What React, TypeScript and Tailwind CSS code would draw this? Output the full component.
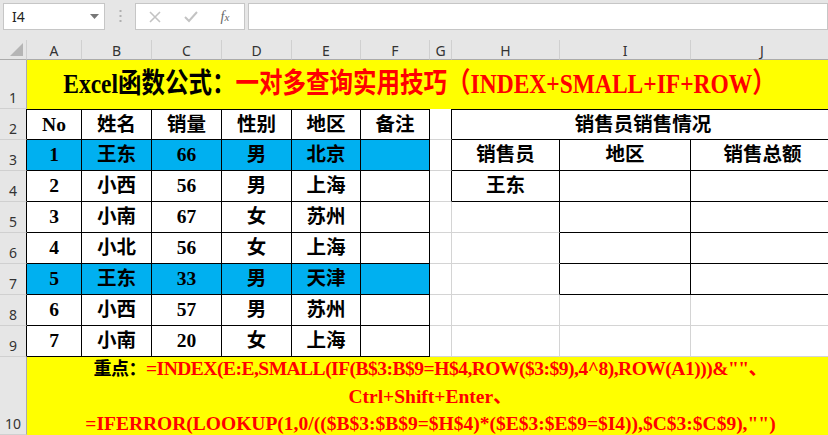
import React from "react";

type BC = "k" | "g" | "n";
const RB: Record<BC, string> = {
  k: "border-r border-r-black",
  g: "border-r border-r-[#d4d4d4]",
  n: "",
};
const BB: Record<BC, string> = {
  k: "border-b border-b-black",
  g: "border-b border-b-[#d4d4d4]",
  n: "",
};
const TB: Record<BC, string> = {
  k: "border-t border-t-black",
  g: "border-t border-t-[#d4d4d4]",
  n: "",
};

const serif = "font-['Liberation_Serif','Noto_Sans_CJK_SC',serif]";
const ui = "font-['Noto_Sans','Liberation_Sans',sans-serif]";

function Cell({
  children,
  r = "g",
  b = "g",
  t = "n",
  bg = "",
  span = "",
}: {
  children?: React.ReactNode;
  r?: BC;
  b?: BC;
  t?: BC;
  bg?: string;
  span?: string;
}) {
  return (
    <div
      className={`${RB[r]} ${BB[b]} ${TB[t]} ${bg} ${span} flex items-center justify-center overflow-hidden whitespace-nowrap ${serif} text-[19.5px] font-bold text-black leading-none`}
    >
      {children}
    </div>
  );
}

function RowHead({ n, dark }: { n: string; dark?: boolean }) {
  return (
    <div
      className={`bg-[#e6e6e6] border-b border-b-[#d0d0d0] border-r ${
        dark ? "border-r-black" : "border-r-[#ababab]"
      } flex items-end justify-center pb-[1px] ${ui} text-[14px] leading-[18px] text-[#333]`}
    >
      {n}
    </div>
  );
}

function ColHead({ l }: { l: string }) {
  return (
    <div
      className={`bg-[#e6e6e6] border-b border-b-[#ababab] border-r border-r-[#d0d0d0] flex items-center justify-center pt-[3px] ${ui} text-[14px] leading-none text-[#333]`}
    >
      {l}
    </div>
  );
}

const people: [string, string, string, string, string, boolean][] = [
  ["1", "王东", "66", "男", "北京", true],
  ["2", "小西", "56", "男", "上海", false],
  ["3", "小南", "67", "女", "苏州", false],
  ["4", "小北", "56", "女", "上海", false],
  ["5", "王东", "33", "男", "天津", true],
  ["6", "小西", "57", "男", "苏州", false],
  ["7", "小南", "20", "女", "上海", false],
];

function RightCells({ row }: { row: number }) {
  if (row === 3) {
    return (
      <>
        <Cell r="k" b="k">销售员</Cell>
        <Cell r="k" b="k">地区</Cell>
        <Cell r="n" b="k">销售总额</Cell>
      </>
    );
  }
  if (row === 4) {
    return (
      <>
        <Cell r="k" b="k">王东</Cell>
        <Cell r="k" b="k"></Cell>
        <Cell r="n" b="k"></Cell>
      </>
    );
  }
  if (row >= 5 && row <= 7) {
    return (
      <>
        <Cell r="k" b="g"></Cell>
        <Cell r="k" b="k"></Cell>
        <Cell r="n" b="k"></Cell>
      </>
    );
  }
  return (
    <>
      <Cell r="g" b="g"></Cell>
      <Cell r="g" b="g"></Cell>
      <Cell r="n" b="g"></Cell>
    </>
  );
}

export default function App() {
  return (
    <div className="w-[828px] h-[435px] overflow-hidden bg-white">
      {/* formula bar */}
      <div className="h-[40px] bg-[#e6e6e6] flex items-start pt-[3px] pl-[3px]">
        <div className="w-[102px] h-[27px] bg-white border border-[#c6c6c6] flex items-center justify-between pl-[8px] pr-[5px]">
          <span className={`${ui} text-[14px] text-[#222] leading-none`}>I4</span>
          <svg width="9" height="5" viewBox="0 0 9 5">
            <path d="M0 0 L9 0 L4.5 5 Z" fill="#777" />
          </svg>
        </div>
        <div className="w-[30px] h-[27px] flex items-center justify-center">
          <svg width="3" height="13" viewBox="0 0 3 13">
            <rect x="0.5" y="0" width="2" height="2" fill="#b0b0b0" />
            <rect x="0.5" y="5" width="2" height="2" fill="#b0b0b0" />
            <rect x="0.5" y="10" width="2" height="2" fill="#b0b0b0" />
          </svg>
        </div>
        <div className="w-[110px] h-[27px] bg-white border border-[#c6c6c6] flex items-center">
          <div className="w-[38px] flex justify-center">
            <svg width="12" height="12" viewBox="0 0 12 12">
              <path d="M1 1 L11 11 M11 1 L1 11" stroke="#c3c3c3" strokeWidth="1.6" />
            </svg>
          </div>
          <div className="w-[34px] flex justify-center">
            <svg width="14" height="12" viewBox="0 0 14 12">
              <path d="M1 6 L5 10 L13 1" stroke="#c3c3c3" strokeWidth="2" fill="none" />
            </svg>
          </div>
          <div className="w-[34px] flex justify-center">
            <span className={`${serif} italic text-[14px] text-[#666] leading-none`}>
              f<span className="text-[11px]">x</span>
            </span>
          </div>
        </div>
        <div className="ml-[3px] flex-1 h-[27px] bg-white border border-[#c6c6c6]"></div>
      </div>

      {/* sheet grid */}
      <div className="grid grid-cols-[27px_55px_70px_70px_70px_69px_69px_22px_108px_131px_143px] grid-rows-[20px_49px_31px_31px_31px_31px_31px_31px_31px_31px_78px]">
        <div className="bg-[#e6e6e6] border-b border-b-[#ababab] border-r border-r-[#d0d0d0] flex items-end justify-end pr-[3px] pb-[3px]">
          <svg width="13" height="13" viewBox="0 0 13 13">
            <path d="M13 0 L13 13 L0 13 Z" fill="#b5b5b5" />
          </svg>
        </div>
        {["A", "B", "C", "D", "E", "F", "G", "H", "I", "J"].map((l) => (
          <ColHead key={l} l={l} />
        ))}

        {/* row 1 */}
        <RowHead n="1" />
        <div className="col-span-10 bg-[#ffff00] flex items-center justify-center pr-[22px]">
          <div
            className={`scale-y-[1.2] ${serif} text-[23.5px] font-bold leading-none whitespace-nowrap`}
          >
            <span className="text-black">Excel函数公式：</span>
            <span className="text-[#ff0000]">一对多查询实用技巧（INDEX+SMALL+IF+ROW）</span>
          </div>
        </div>

        {/* row 2 */}
        <RowHead n="2" dark />
        {["No", "姓名", "销量", "性别", "地区", "备注"].map((h) => (
          <Cell key={h} r="k" b="k" t="k">
            {h}
          </Cell>
        ))}
        <Cell r="k" b="g"></Cell>
        <Cell r="n" b="k" t="k" span="col-span-3">
          销售员销售情况
        </Cell>

        {/* rows 3-9 */}
        {people.map((p, i) => {
          const row = i + 3;
          const bg = p[5] ? "bg-[#00b0f0]" : "";
          return (
            <React.Fragment key={row}>
              <RowHead n={String(row)} dark />
              <Cell r="k" b="k" bg={bg}>{p[0]}</Cell>
              <Cell r="k" b="k" bg={bg}>{p[1]}</Cell>
              <Cell r="k" b="k" bg={bg}>{p[2]}</Cell>
              <Cell r="k" b="k" bg={bg}>{p[3]}</Cell>
              <Cell r="k" b="k" bg={bg}>{p[4]}</Cell>
              <Cell r="k" b="k" bg={bg}></Cell>
              <Cell r={row <= 4 ? "k" : "g"} b="g"></Cell>
              <RightCells row={row} />
            </React.Fragment>
          );
        })}

        {/* row 10 */}
        <RowHead n="10" />
        <div
          className={`col-span-10 bg-[#ffff00] flex flex-col items-center justify-center ${serif} text-[19.5px] font-bold leading-[27px] text-[#ff0000] whitespace-nowrap`}
        >
          <div className="tracking-[-0.5px]">
            <span className="text-black text-[18px]">重点：</span>
            {'=INDEX(E:E,SMALL(IF(B$3:B$9=H$4,ROW($3:$9),4^8),ROW(A1)))&""、'}
          </div>
          <div>Ctrl+Shift+Enter、</div>
          <div>{'=IFERROR(LOOKUP(1,0/(($B$3:$B$9=$H$4)*($E$3:$E$9=$I4)),$C$3:$C$9),"")'}</div>
        </div>
      </div>
    </div>
  );
}
